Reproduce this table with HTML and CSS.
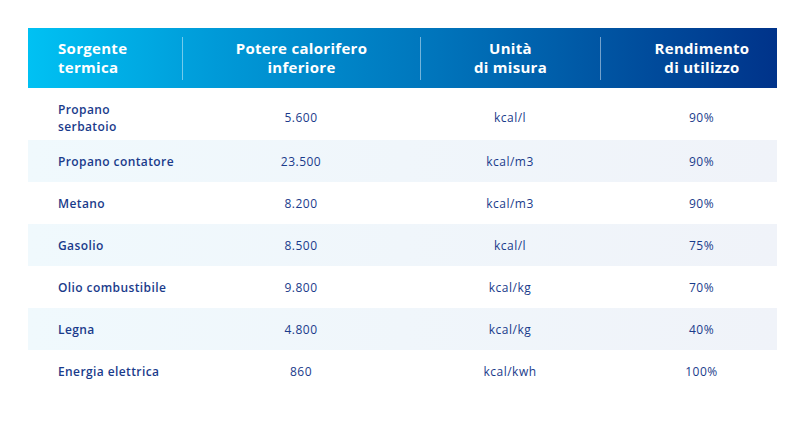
FILE: index.html
```html
<!DOCTYPE html>
<html lang="it">
<head>
<meta charset="utf-8">
<title>Tabella</title>
<link rel="stylesheet" href="styles.css">
</head>
<body>
<div class="table">
  <div class="head">
    <div class="hcell c1">Sorgente<br>termica</div>
    <div class="hcell c2 sep">Potere calorifero<br>inferiore</div>
    <div class="hcell c3 sep">Unità<br>di misura</div>
    <div class="hcell c4 sep">Rendimento<br>di utilizzo</div>
  </div>
  <div class="row first">
    <div class="cell c1">Propano<br>serbatoio</div>
    <div class="cell c2">5.600</div>
    <div class="cell c3">kcal/l</div>
    <div class="cell c4">90%</div>
  </div>
  <div class="row alt">
    <div class="cell c1">Propano contatore</div>
    <div class="cell c2">23.500</div>
    <div class="cell c3">kcal/m3</div>
    <div class="cell c4">90%</div>
  </div>
  <div class="row">
    <div class="cell c1">Metano</div>
    <div class="cell c2">8.200</div>
    <div class="cell c3">kcal/m3</div>
    <div class="cell c4">90%</div>
  </div>
  <div class="row alt">
    <div class="cell c1">Gasolio</div>
    <div class="cell c2">8.500</div>
    <div class="cell c3">kcal/l</div>
    <div class="cell c4">75%</div>
  </div>
  <div class="row">
    <div class="cell c1">Olio combustibile</div>
    <div class="cell c2">9.800</div>
    <div class="cell c3">kcal/kg</div>
    <div class="cell c4">70%</div>
  </div>
  <div class="row alt">
    <div class="cell c1">Legna</div>
    <div class="cell c2">4.800</div>
    <div class="cell c3">kcal/kg</div>
    <div class="cell c4">40%</div>
  </div>
  <div class="row">
    <div class="cell c1">Energia elettrica</div>
    <div class="cell c2">860</div>
    <div class="cell c3">kcal/kwh</div>
    <div class="cell c4">100%</div>
  </div>
</div>
</body>
</html>
```
FILE: styles.css
```css
html, body {
  margin: 0;
  padding: 0;
  background: #ffffff;
}
body {
  font-family: "Open Sans", "Liberation Sans", sans-serif;
  padding: 28px 0 0 28px;
}
.table {
  width: 749px;
}
.head, .row {
  display: grid;
  grid-template-columns: 154px 238px 180px 177px;
}
.head {
  height: 60px;
  background: linear-gradient(90deg, #00c1f3 0%, #009ad8 25%, #0074bb 55%, #00509f 80%, #00338a 100%);
  color: #ffffff;
  font-weight: 700;
  font-size: 15px;
  line-height: 19px;
  letter-spacing: 0.3px;
  align-items: center;
}
.hcell {
  height: 43px;
  display: flex;
  flex-direction: column;
  justify-content: center;
  text-align: center;
  align-items: center;
}
.hcell.c1 {
  text-align: left;
  align-items: flex-start;
  padding-left: 30px;
}
.hcell.sep {
  border-left: 1px solid rgba(255, 255, 255, 0.45);
}
.hcell.c4 { padding-left: 26px; }
.row {
  height: 42px;
  padding-top: 1px;
  box-sizing: border-box;
  align-items: center;
  color: #1a3b8b;
  font-size: 12px;
  font-weight: 500;
  line-height: 17px;
  letter-spacing: 0.5px;
}
.row.first {
  height: 52px;
  padding-top: 7px;
  line-height: 17px;
}
.row.alt {
  background: linear-gradient(90deg, #f0f9fd 0%, #f0f6fb 50%, #f0f3f9 100%);
}
.cell {
  text-align: center;
}
.cell.c1 {
  text-align: left;
  padding-left: 30px;
  font-weight: 600;
  letter-spacing: 0.4px;
}
.cell.c4 {
  padding-left: 26px;
}
```
